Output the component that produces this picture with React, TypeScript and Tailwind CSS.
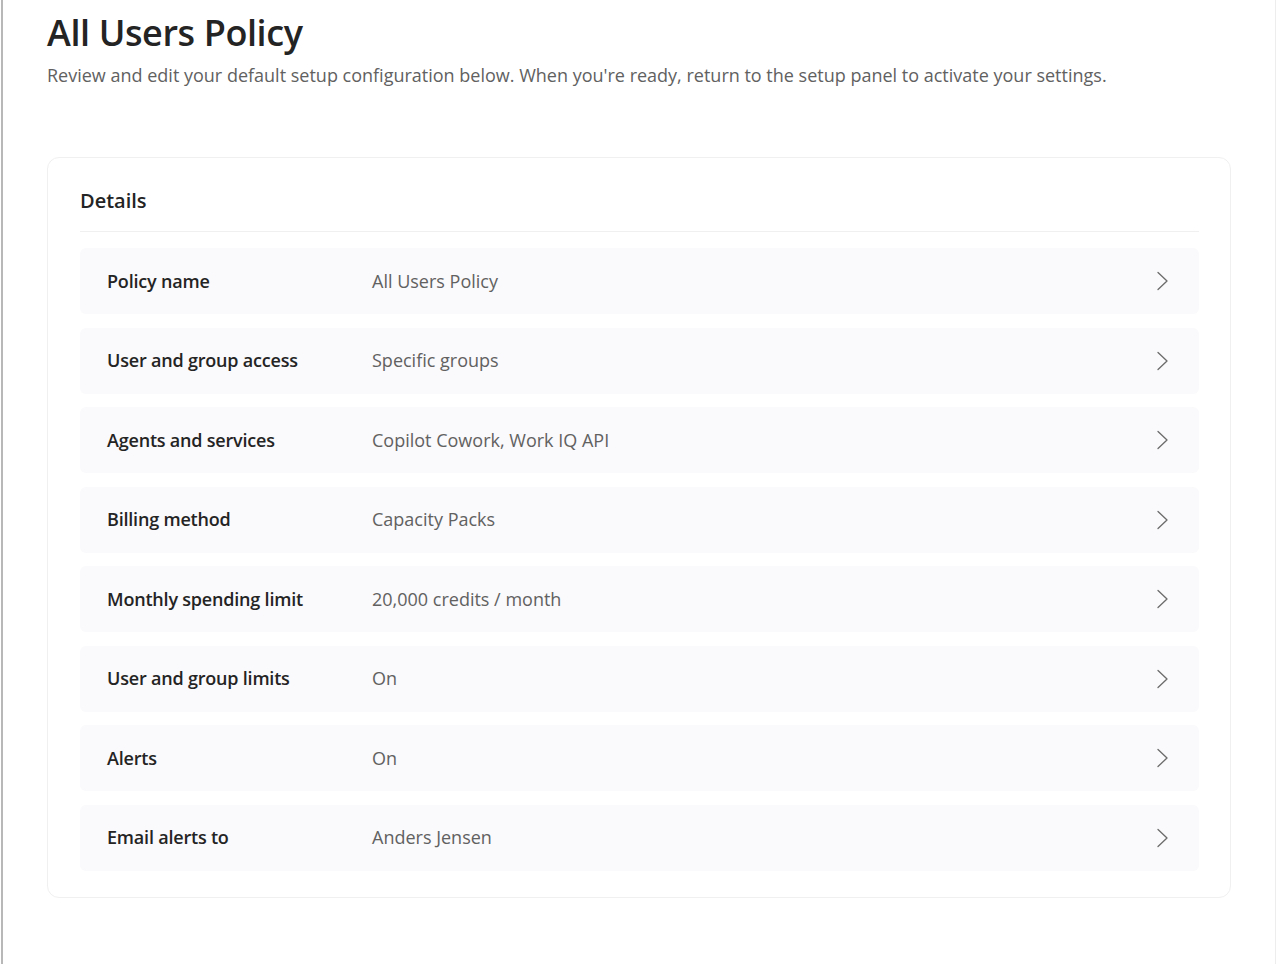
import React from "react";

const rows: { label: string; value: string }[] = [
  { label: "Policy name", value: "All Users Policy" },
  { label: "User and group access", value: "Specific groups" },
  { label: "Agents and services", value: "Copilot Cowork, Work IQ API" },
  { label: "Billing method", value: "Capacity Packs" },
  { label: "Monthly spending limit", value: "20,000 credits / month" },
  { label: "User and group limits", value: "On" },
  { label: "Alerts", value: "On" },
  { label: "Email alerts to", value: "Anders Jensen" },
];

const Chevron = () => (
  <svg width="16" height="20" viewBox="0 0 16 20" fill="none" className="text-[#6b6b6b]">
    <path d="M3 1.5 L12 10 L3 18.5" stroke="currentColor" strokeWidth="1.3" strokeLinecap="round" strokeLinejoin="round" />
  </svg>
);

export default function App() {
  return (
    <div className="min-h-[964px] w-[1280px] bg-white flex font-['Open_Sans',sans-serif]">
      <div className="w-[3px] border-r-2 border-[#b8b8b8] shrink-0" />
      <main className="flex-1 pl-[44px] pr-[44px] pt-[9px] border-r border-[#ededed] mr-[4px]">
        <h1 className="text-[36px] leading-[48px] font-semibold text-[#242424] tracking-[-0.4px]">
          All Users Policy
        </h1>
        <p className="mt-[6px] text-[18px] leading-[24px] text-[#616161]">
          Review and edit your default setup configuration below. When you're ready, return to the setup panel to activate your settings.
        </p>

        <section className="mt-[70px] w-[1184px] rounded-[12px] border border-[#f0f0f0] bg-white pl-[32px] pr-[31px] pt-[27px] pb-[26px]">
          <h2 className="text-[20px] leading-[32px] font-semibold text-[#242424]">Details</h2>
          <div className="mt-[14px] h-px bg-[#f0f0f0]" />
          <div className="mt-[16px] flex flex-col gap-[13.5px]">
            {rows.map((row) => (
              <div
                key={row.label}
                className="flex items-center h-[66px] rounded-[6px] bg-[#faf9fb] pl-[27px] pr-[28px]"
              >
                <div className="w-[265px] shrink-0 text-[18px] font-semibold text-[#242424] tracking-[-0.2px]">
                  {row.label}
                </div>
                <div className="flex-1 text-[18px] text-[#616161]">{row.value}</div>
                <Chevron />
              </div>
            ))}
          </div>
        </section>
      </main>
    </div>
  );
}
